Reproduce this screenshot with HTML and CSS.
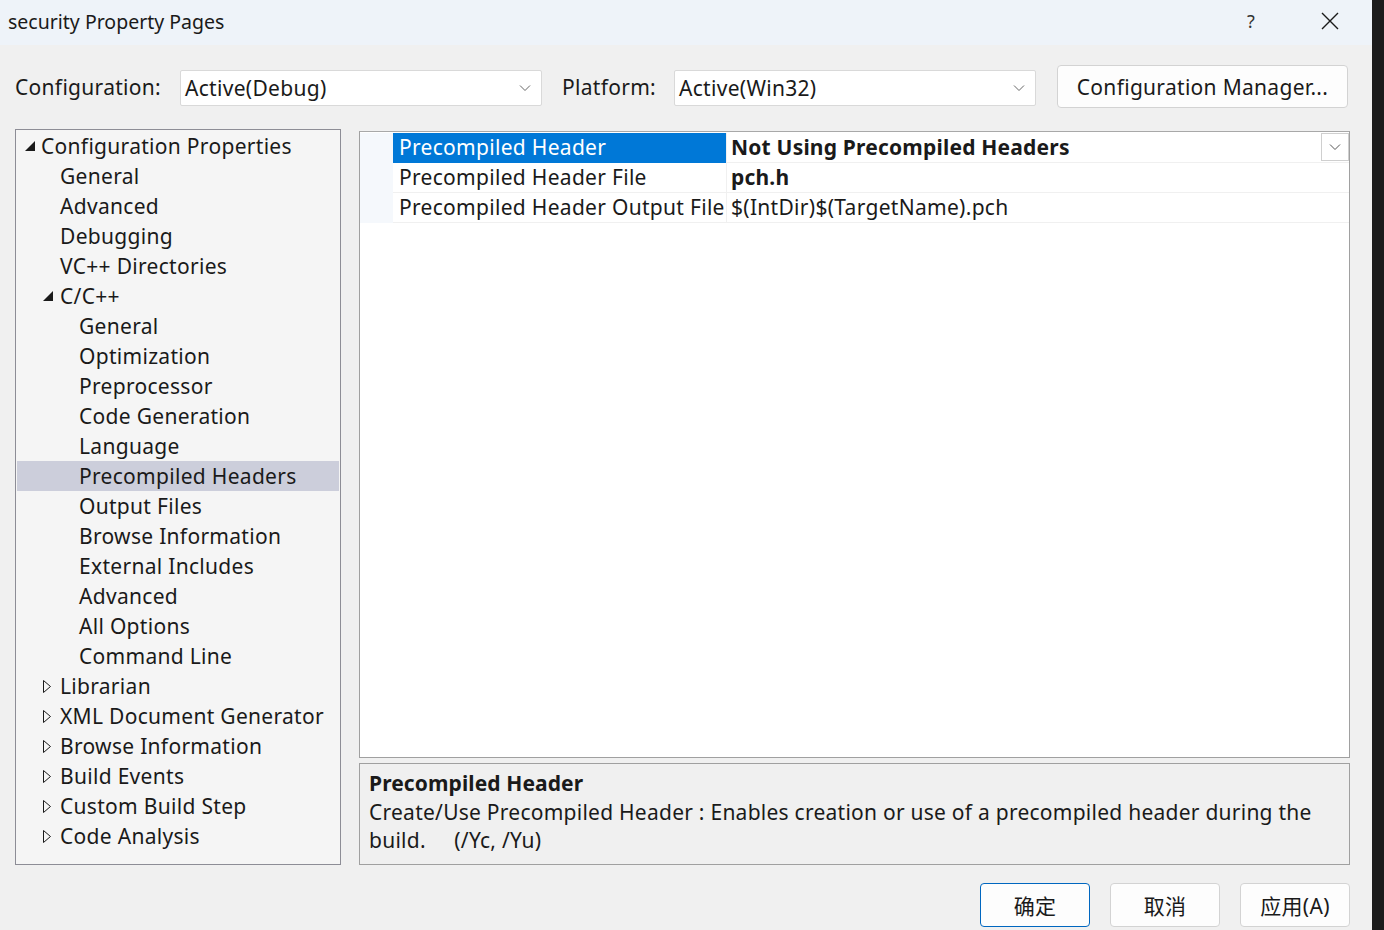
FILE: index.html
```html
<!DOCTYPE html>
<html>
<head>
<meta charset="utf-8">
<link rel="stylesheet" href="styles.css">
</head>
<body>
<div class="screen">
  <div class="dialog">
    <div class="titlebar">
      <span class="title">security Property Pages</span>
      <span class="tb-help">?</span>
      <span class="tb-close"><svg width="18" height="18" viewBox="0 0 18 18"><path d="M1 1L17 17M17 1L1 17" stroke="#1a1a1a" stroke-width="1.4" fill="none"/></svg></span>
    </div>
    <div class="body">
      <div class="toolbar">
        <span class="lbl">Configuration:</span>
        <div class="combo combo-config"><span>Active(Debug)</span><svg class="chev" width="12" height="8" viewBox="0 0 12 8"><path d="M1 1.5L6 6.5L11 1.5" stroke="#666" stroke-width="1" fill="none"/></svg></div>
        <span class="lbl lbl-plat">Platform:</span>
        <div class="combo combo-plat"><span>Active(Win32)</span><svg class="chev" width="12" height="8" viewBox="0 0 12 8"><path d="M1 1.5L6 6.5L11 1.5" stroke="#666" stroke-width="1" fill="none"/></svg></div>
        <button class="btn btn-mgr">Configuration Manager...</button>
      </div>
      <div class="main">
        <div class="tree">
          <div class="row l0"><svg class="exp" width="10" height="10" viewBox="0 0 10 10"><path d="M10 0V10H0Z" fill="#1a1a1a"/></svg>Configuration Properties</div>
          <div class="row l1">General</div>
          <div class="row l1">Advanced</div>
          <div class="row l1">Debugging</div>
          <div class="row l1">VC++ Directories</div>
          <div class="row l1 t"><svg class="exp" width="10" height="10" viewBox="0 0 10 10"><path d="M10 0V10H0Z" fill="#1a1a1a"/></svg>C/C++</div>
          <div class="row l2">General</div>
          <div class="row l2">Optimization</div>
          <div class="row l2">Preprocessor</div>
          <div class="row l2">Code Generation</div>
          <div class="row l2">Language</div>
          <div class="row l2 sel">Precompiled Headers</div>
          <div class="row l2">Output Files</div>
          <div class="row l2">Browse Information</div>
          <div class="row l2">External Includes</div>
          <div class="row l2">Advanced</div>
          <div class="row l2">All Options</div>
          <div class="row l2">Command Line</div>
          <div class="row l1 t"><svg class="col" width="10" height="15" viewBox="0 0 10 15"><path d="M1.5 1.5L8.5 7.5L1.5 13.5Z" stroke="#1a1a1a" stroke-width="1" fill="none"/></svg>Librarian</div>
          <div class="row l1 t"><svg class="col" width="10" height="15" viewBox="0 0 10 15"><path d="M1.5 1.5L8.5 7.5L1.5 13.5Z" stroke="#1a1a1a" stroke-width="1" fill="none"/></svg>XML Document Generator</div>
          <div class="row l1 t"><svg class="col" width="10" height="15" viewBox="0 0 10 15"><path d="M1.5 1.5L8.5 7.5L1.5 13.5Z" stroke="#1a1a1a" stroke-width="1" fill="none"/></svg>Browse Information</div>
          <div class="row l1 t"><svg class="col" width="10" height="15" viewBox="0 0 10 15"><path d="M1.5 1.5L8.5 7.5L1.5 13.5Z" stroke="#1a1a1a" stroke-width="1" fill="none"/></svg>Build Events</div>
          <div class="row l1 t"><svg class="col" width="10" height="15" viewBox="0 0 10 15"><path d="M1.5 1.5L8.5 7.5L1.5 13.5Z" stroke="#1a1a1a" stroke-width="1" fill="none"/></svg>Custom Build Step</div>
          <div class="row l1 t"><svg class="col" width="10" height="15" viewBox="0 0 10 15"><path d="M1.5 1.5L8.5 7.5L1.5 13.5Z" stroke="#1a1a1a" stroke-width="1" fill="none"/></svg>Code Analysis</div>
        </div>
        <div class="right">
          <div class="grid">
            <div class="prow">
              <div class="gut"></div>
              <div class="pname psel">Precompiled Header</div>
              <div class="pval"><b>Not Using Precompiled Headers</b><span class="ddbtn"><svg width="12" height="8" viewBox="0 0 12 8"><path d="M1 1.5L6 6.5L11 1.5" stroke="#555" stroke-width="1" fill="none"/></svg></span></div>
            </div>
            <div class="prow">
              <div class="gut"></div>
              <div class="pname">Precompiled Header File</div>
              <div class="pval"><b>pch.h</b></div>
            </div>
            <div class="prow">
              <div class="gut"></div>
              <div class="pname">Precompiled Header Output File</div>
              <div class="pval">$(IntDir)$(TargetName).pch</div>
            </div>
          </div>
          <div class="desc">
            <div class="desc-title">Precompiled Header</div>
            <div class="desc-text">Create/Use Precompiled Header : Enables creation or use of a precompiled header during the build.&nbsp;&nbsp;&nbsp;&nbsp; (/Yc, /Yu)</div>
          </div>
        </div>
      </div>
      <div class="footer">
        <button class="btn fbtn default">确定</button>
        <button class="btn fbtn">取消</button>
        <button class="btn fbtn">应用(A)</button>
      </div>
    </div>
  </div>
  <div class="behind"></div>
</div>
</body>
</html>
```

FILE: styles.css
```css
html, body {
  margin: 0;
  padding: 0;
}
body {
  width: 1384px;
  height: 930px;
  overflow: hidden;
  font-family: "Noto Sans", "Noto Sans CJK SC", sans-serif;
  font-size: 21px;
  letter-spacing: 0.3px;
  color: #1a1a1a;
}
.screen {
  display: flex;
  width: 1384px;
  height: 930px;
}
.dialog {
  width: 1372px;
  height: 930px;
  background: #f0f0f0;
  display: flex;
  flex-direction: column;
}
.behind {
  flex: 1;
  background: #1c1c1c;
}
.titlebar {
  height: 45px;
  background: #eef3f9;
  display: flex;
  align-items: center;
  padding-left: 8px;
  flex-shrink: 0;
}
.title {
  font-size: 19.5px;
  letter-spacing: 0;
  flex: 1;
  margin-top: -3px;
}
.tb-help {
  font-size: 18px;
  color: #333;
  margin-right: 66px;
  margin-top: -4px;
}
.tb-close {
  margin-right: 33px;
  display: flex;
  margin-top: -4px;
}
.body {
  flex: 1;
  display: flex;
  flex-direction: column;
  padding: 20px 22px 0 15px;
}
.toolbar {
  display: flex;
  align-items: center;
  height: 43px;
}
.lbl {
  width: 165px;
  flex-shrink: 0;
}
.lbl-plat {
  width: 112px;
  margin-left: 20px;
}
.combo {
  background: #fff;
  border: 1px solid #d9d9d9;
  border-radius: 2px;
  display: flex;
  align-items: center;
  padding-left: 4px;
  box-sizing: border-box;
  height: 36px;
  margin-top: 2px;
}
.combo span {
  flex: 1;
}
.chev {
  margin-right: 10px;
}
.combo-config {
  width: 362px;
}
.combo-plat {
  width: 362px;
}
.btn {
  font-family: "Noto Sans", "Noto Sans CJK SC", sans-serif;
  font-size: 21px;
  letter-spacing: 0.3px;
  color: #1a1a1a;
  background: #fdfdfd;
  border: 1px solid #d3d3d3;
  border-radius: 4px;
  padding: 0;
}
.btn-mgr {
  margin-left: 21px;
  width: 291px;
  height: 43px;
}
.main {
  display: flex;
  margin-top: 21px;
  height: 736px;
}
.tree {
  width: 326px;
  box-sizing: border-box;
  border: 1px solid #8d8d96;
  background: #f5f5f5;
  padding: 1px 1px 0 1px;
}
.row {
  height: 30px;
  line-height: 30px;
  white-space: nowrap;
  position: relative;
}
.l0 { padding-left: 24px; }
.l1 { padding-left: 43px; }
.l2 { padding-left: 62px; }
.sel { background: #cccedb; }
.exp {
  position: absolute;
  top: 10px;
}
.l0 .exp { left: 8px; }
.l1 .exp { left: 26px; }
.col {
  position: absolute;
  left: 25px;
  top: 8px;
}
.right {
  flex: 1;
  margin-left: 18px;
  display: flex;
  flex-direction: column;
}
.grid {
  height: 628px;
  box-sizing: border-box;
  border: 1px solid #a0a0a0;
  border-top-color: #a8a8a8;
  background: #fff;
  padding-top: 1px;
  margin-top: 2px;
}
.prow {
  display: flex;
  height: 30px;
  line-height: 29px;
}
.gut {
  width: 33px;
  background: #f5f8fc;
  flex-shrink: 0;
}
.pname {
  width: 327px;
  padding-left: 6px;
  border-bottom: 1px solid #f0f0f0;
  white-space: nowrap;
}
.psel {
  background: #0078d7;
  color: #fff;
  border-bottom-color: #0078d7;
}
.pval {
  flex: 1;
  padding-left: 4px;
  border-bottom: 1px solid #f0f0f0;
  border-left: 1px solid #f0f0f0;
  display: flex;
  position: relative;
  white-space: nowrap;
}
.pval b {
  font-weight: 700;
  letter-spacing: 0.2px;
}
.ddbtn {
  position: absolute;
  right: 0;
  top: 0;
  width: 28px;
  height: 28px;
  box-sizing: border-box;
  border: 1px solid #cfcfcf;
  background: #fff;
  display: flex;
  align-items: center;
  justify-content: center;
}
.desc {
  margin-top: 5px;
  height: 102px;
  box-sizing: border-box;
  border: 1px solid #a0a0a0;
  background: #f0f0f0;
  padding: 4px 30px 0 9px;
}
.desc-title {
  font-weight: 700;
  letter-spacing: 0.1px;
  line-height: 30px;
}
.desc-text {
  line-height: 28px;
  letter-spacing: 0.25px;
}
.footer {
  display: flex;
  justify-content: flex-end;
  gap: 20px;
  margin-top: 18px;
}
.fbtn {
  width: 110px;
  height: 44px;
}
.default {
  border-color: #0067c0;
}
```
